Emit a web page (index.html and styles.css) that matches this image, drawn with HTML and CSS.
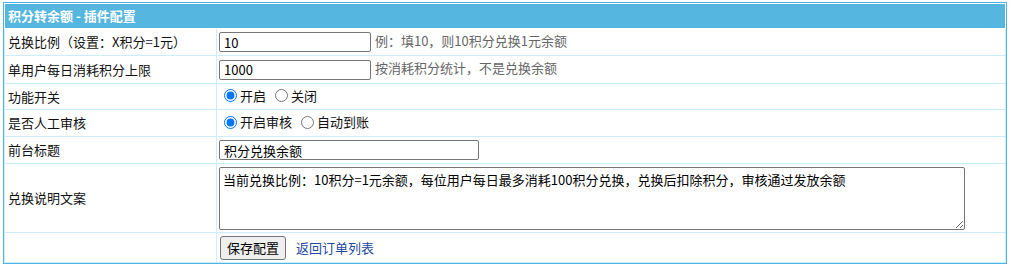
FILE: index.html
```html
<!DOCTYPE html>
<html lang="zh-CN">
<head>
<meta charset="utf-8">
<title>积分转余额 - 插件配置</title>
<link rel="stylesheet" href="styles.css">
</head>
<body>
<div class="panel">
  <table class="form-table">
    <tr><th colspan="2" class="head">积分转余额 - 插件配置</th></tr>
    <tr>
      <td class="label">兑换比例（设置：X积分=1元）</td>
      <td class="field"><input class="txt w-s" type="text" value="10"> <span class="hint">例：填10，则10积分兑换1元余额</span></td>
    </tr>
    <tr>
      <td class="label">单用户每日消耗积分上限</td>
      <td class="field"><input class="txt w-s" type="text" value="1000"> <span class="hint">按消耗积分统计，不是兑换余额</span></td>
    </tr>
    <tr class="radio-row">
      <td class="label">功能开关</td>
      <td class="field"><label class="opt"><input type="radio" name="on" checked>开启</label><label class="opt"><input type="radio" name="on">关闭</label></td>
    </tr>
    <tr class="radio-row">
      <td class="label">是否人工审核</td>
      <td class="field"><label class="opt"><input type="radio" name="audit" checked>开启审核</label><label class="opt"><input type="radio" name="audit">自动到账</label></td>
    </tr>
    <tr>
      <td class="label">前台标题</td>
      <td class="field"><input class="txt w-m" type="text" value="积分兑换余额"></td>
    </tr>
    <tr>
      <td class="label">兑换说明文案</td>
      <td class="field area-cell"><textarea class="area">当前兑换比例：10积分=1元余额，每位用户每日最多消耗100积分兑换，兑换后扣除积分，审核通过发放余额</textarea></td>
    </tr>
    <tr>
      <td class="label"></td>
      <td class="field actions"><button class="btn" type="button">保存配置</button><a class="back" href="#">返回订单列表</a></td>
    </tr>
  </table>
</div>
</body>
</html>
```
FILE: styles.css
```css
html, body {
  margin: 0;
  padding: 0;
  background: #fff;
}
body {
  font-family: "Noto Sans CJK SC", "Microsoft YaHei", sans-serif;
  font-size: 13px;
  color: #111;
}
.panel {
  margin: 2px 0 0 3px;
  width: 1002px;
  border: 1px solid #4fb4e2;
}
.form-table {
  width: 100%;
  border-collapse: collapse;
}
.form-table td, .form-table th {
  border: 1px solid #cbeefb;
  vertical-align: middle;
  line-height: 18px;
}
.head {
  background: #55b6df;
  color: #fff;
  font-weight: bold;
  text-align: left;
  height: 24px;
  padding: 0 3px;
  border-color: #fff !important;
}
.label {
  width: 205px;
  padding: 0 3px;
  height: 26px;
}
.field {
  padding: 3px 2px;
}
.radio-row .label, .radio-row .field { height: 19px; }
.txt {
  font-family: inherit;
  font-size: 13px;
  height: 20px;
  box-sizing: border-box;
  border: 1px solid #767676;
  border-radius: 2px;
  padding: 0 4px;
  margin: 0;
  vertical-align: middle;
  color: #000;
}
.w-s { width: 152px; margin-right: 1px; }
.w-m { width: 260px; }
.hint { color: #666; }
.opt {
  display: inline-flex;
  align-items: center;
  margin-right: 4px;
}
.opt input {
  margin: 0 3px 0 5px;
  width: 13px;
  height: 13px;
}
.area-cell { padding: 3px 2px 2px; }
.area {
  display: block;
  box-sizing: border-box;
  width: 746px;
  height: 63px;
  font-family: inherit;
  font-size: 13px;
  line-height: 18px;
  border: 1px solid #767676;
  border-radius: 2px;
  padding: 3px 3px;
  margin: 0;
  resize: vertical;
  color: #000;
}
.actions { padding: 2px 2px 2px 3px; height: 25px; }
.btn {
  font-family: inherit;
  font-size: 13px;
  height: 24px;
  padding: 0 6px;
  background: #efefef;
  border: 1px solid #767676;
  border-radius: 3px;
  color: #000;
  vertical-align: middle;
  margin: 0;
}
.back {
  color: #22489e;
  text-decoration: none;
  margin-left: 10px;
  vertical-align: middle;
}
```
